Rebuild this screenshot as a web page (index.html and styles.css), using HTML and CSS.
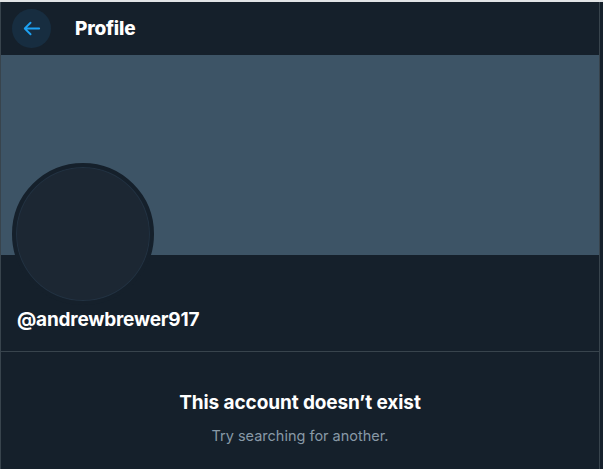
FILE: index.html
```html
<!DOCTYPE html>
<html>
<head>
<meta charset="utf-8">
<link rel="stylesheet" href="styles.css">
</head>
<body>
<div class="topline"></div>
<main class="column">
  <header class="header">
    <div class="back">
      <svg viewBox="0 0 24 24" width="23" height="23"><path fill="#1da1f2" d="M20 11H7.414l4.293-4.293a1 1 0 0 0-1.414-1.414l-6 6a1 1 0 0 0 0 1.414l6 6a.996.996 0 0 0 1.414 0 1 1 0 0 0 0-1.414L7.414 13H20a1 1 0 1 0 0-2z"/></svg>
    </div>
    <h1 class="title">Profile</h1>
  </header>
  <div class="banner"></div>
  <section class="info">
    <div class="avatar"></div>
    <div class="handle">@andrewbrewer917</div>
  </section>
  <section class="empty">
    <div class="empty-title">This account doesn’t exist</div>
    <div class="empty-sub">Try searching for another.</div>
  </section>
</main>
</body>
</html>
```
FILE: styles.css
```css
html, body {
  margin: 0;
  padding: 0;
}
body {
  background: #15202b;
  font-family: Inter, "Liberation Sans", sans-serif;
  color: #ffffff;
  height: 469px;
  overflow: hidden;
}
.topline {
  height: 2px;
  background: #e1e4e6;
}
.column {
  width: 598px;
  border-left: 1px solid #38444d;
  border-right: 1px solid #38444d;
  height: 467px;
  display: flex;
  flex-direction: column;
}
.header {
  height: 53px;
  display: flex;
  align-items: center;
  padding-left: 11px;
  gap: 24px;
}
.back {
  width: 39px;
  height: 39px;
  border-radius: 50%;
  background: #172d40;
  display: flex;
  align-items: center;
  justify-content: center;
}
.title {
  margin: 0;
  font-size: 19px;
  font-weight: 800;
  letter-spacing: -0.2px;
}
.banner {
  height: 200px;
  background: #3d5466;
}
.info {
  position: relative;
  height: 96px;
  border-bottom: 1px solid #38444d;
  padding-left: 16px;
}
.avatar {
  position: absolute;
  left: 11px;
  top: -92px;
  width: 134px;
  height: 134px;
  border-radius: 50%;
  background: #1c2733;
  border: 4px solid #15202b;
  box-shadow: inset 0 0 0 1px #223242;
}
.handle {
  padding-top: 53px;
  font-size: 19px;
  font-weight: 700;
  letter-spacing: -0.2px;
}
.empty {
  display: flex;
  flex-direction: column;
  align-items: center;
  padding-top: 39px;
}
.empty-title {
  font-size: 19px;
  font-weight: 700;
  letter-spacing: -0.1px;
}
.empty-sub {
  margin-top: 13px;
  font-size: 14.5px;
  color: #8899a6;
}
```
